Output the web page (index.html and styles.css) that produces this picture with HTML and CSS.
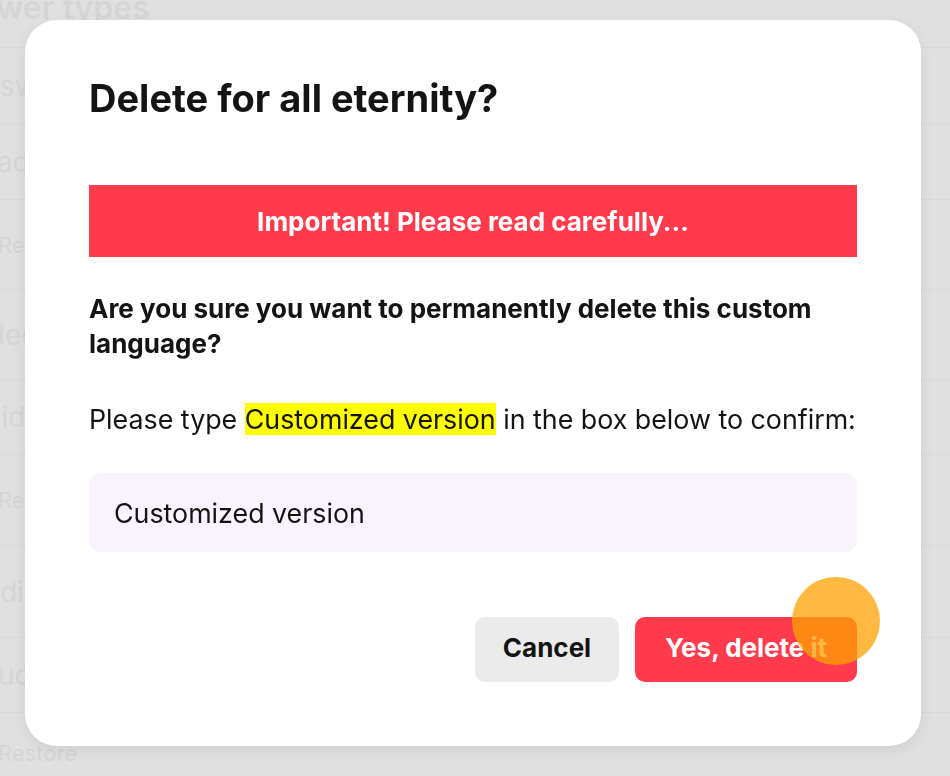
FILE: index.html
```html
<!DOCTYPE html>
<html lang="en">
<head>
    <meta charset="UTF-8">
    <meta name="viewport" content="width=device-width, initial-scale=1.0">
    <title>Delete custom language</title>
    <link rel="stylesheet" href="styles.css">
</head>
<body>
    <!-- page behind the overlay -->
    <div class="page">
        <div class="page-title">Answer types</div>
        <div class="row h77"><span class="row-label">Answers</span></div>
        <div class="row h75"><span class="row-label">Loading</span></div>
        <div class="row h90"><span class="row-sub">Restore</span></div>
        <div class="row h90"><span class="row-label">Selected</span></div>
        <div class="row h75"><span class="row-label">Guide</span></div>
        <div class="row h91"><span class="row-sub">Restore</span></div>
        <div class="row h92"><span class="row-label">Audio</span></div>
        <div class="row h75"><span class="row-label">Education</span></div>
        <div class="row h80"><span class="row-sub">Restore</span></div>
    </div>

    <div class="overlay">
        <div class="modal">
            <h1 class="modal-title">Delete for all eternity?</h1>

            <div class="warning">Important! Please read carefully...</div>

            <p class="question">Are you sure you want to permanently delete this custom language?</p>

            <p class="confirm-text">Please type <span class="highlight">Customized version</span> in the box below to confirm:</p>

            <input class="confirm-input" type="text" value="Customized version">

            <div class="actions">
                <button class="btn btn-cancel">Cancel</button>
                <button class="btn btn-delete">Yes, delete it</button>
            </div>
        </div>
    </div>

    <div class="touch-dot"></div>
</body>
</html>
```

FILE: styles.css
```css
body {
    margin: 0;
    background-color: #e0e0e0;
    font-family: Inter, 'Liberation Sans', sans-serif;
    color: #141414;
    overflow: hidden;
    height: 776px;
}

/* background page */
.page {
    margin-top: -32px;
    color: #d5d5d5;
}

.page-title {
    height: 80px;
    display: flex;
    align-items: center;
    font-size: 32px;
    font-weight: 600;
    margin-left: -64px;
    border-bottom: 1px solid #d9d9d9;
    box-sizing: border-box;
}

.row {
    display: flex;
    align-items: center;
    box-sizing: border-box;
    border-bottom: 1px solid #d9d9d9;
}

.h75 { height: 75px; }
.h77 { height: 77px; }
.h80 { height: 80px; }
.h90 { height: 90px; }
.h91 { height: 91px; }
.h92 { height: 92px; }

.row-label {
    font-size: 28px;
    margin-left: -36px;
}

.row-sub {
    font-size: 22px;
    margin-left: -2px;
}

/* modal */
.overlay {
    position: fixed;
    top: 0;
    left: 0;
    right: 0;
    bottom: 0;
}

.modal {
    position: absolute;
    top: 20px;
    left: 25px;
    width: 768px;
    padding: 55px 64px 64px;
    background: #fff;
    border-radius: 32px;
    box-shadow: 0 4px 14px rgba(0, 0, 0, 0.08);
}

.modal-title {
    margin: 0;
    font-size: 38px;
    line-height: 46px;
    font-weight: bold;
    color: #141414;
}

.warning {
    margin-top: 64px;
    height: 72px;
    display: flex;
    align-items: center;
    justify-content: center;
    background: #ff3b4c;
    color: #fff;
    font-size: 26px;
    font-weight: bold;
}

.question {
    margin: 34px 0 0;
    font-size: 26px;
    line-height: 35px;
    font-weight: bold;
}

.confirm-text {
    margin: 41px 0 0;
    font-size: 26.8px;
    line-height: 35px;
}

.highlight {
    background: #ffff00;
}

.confirm-input {
    display: block;
    box-sizing: border-box;
    width: 100%;
    height: 79px;
    margin-top: 36px;
    padding: 0 25px;
    border: none;
    border-radius: 12px;
    background: #f8f3fd;
    font-family: inherit;
    font-size: 26.8px;
    color: #141414;
    outline: none;
}

.actions {
    display: flex;
    justify-content: flex-end;
    gap: 16px;
    margin-top: 65px;
}

.btn {
    height: 65px;
    padding: 0 0 5px;
    border: none;
    border-radius: 10px;
    font-family: inherit;
    font-size: 26px;
    font-weight: bold;
    cursor: pointer;
}

.btn-cancel {
    width: 144px;
    background: #ebebeb;
    color: #141414;
}

.btn-delete {
    width: 222px;
    background: #ff3b4c;
    color: #fff;
}

/* tap indicator from the recording */
.touch-dot {
    position: fixed;
    top: 577px;
    left: 792px;
    width: 88px;
    height: 88px;
    border-radius: 50%;
    background: rgba(255, 162, 2, 0.75);
    filter: blur(0.5px);
}
```
